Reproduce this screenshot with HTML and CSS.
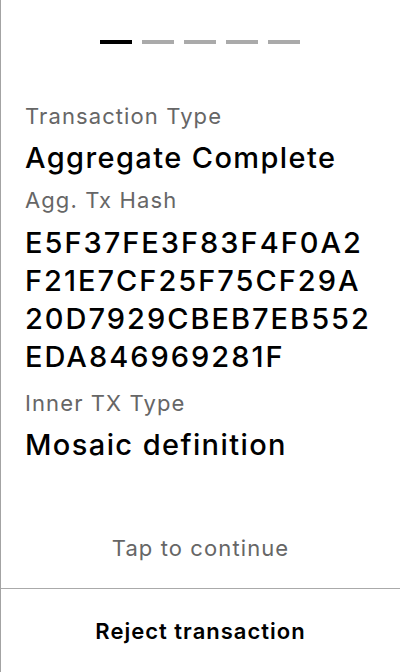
FILE: index.html
```html
<!DOCTYPE html>
<html lang="en">
<head>
<meta charset="utf-8">
<title>Transaction</title>
<link rel="stylesheet" href="styles.css">
</head>
<body>
<main class="screen">
  <div class="progress">
    <span class="bar bar-active"></span>
    <span class="bar"></span>
    <span class="bar"></span>
    <span class="bar"></span>
    <span class="bar"></span>
  </div>
  <section class="details">
    <div class="label">Transaction Type</div>
    <div class="value">Aggregate Complete</div>
    <div class="label">Agg. Tx Hash</div>
    <div class="value hash">E5F37FE3F83F4F0A2F21E7CF25F75CF29A20D7929CBEB7EB552EDA846969281F</div>
    <div class="label">Inner TX Type</div>
    <div class="value">Mosaic definition</div>
  </section>
  <div class="tap">Tap to continue</div>
  <button class="reject">Reject transaction</button>
</main>
</body>
</html>
```
FILE: styles.css
```css
* { box-sizing: border-box; }
html, body { margin: 0; padding: 0; background: #fff; }
body {
  font-family: Inter, "Noto Sans", sans-serif;
  color: #000;
}
.screen {
  width: 400px;
  height: 672px;
  border-left: 1px solid #a3a3a3;
  display: flex;
  flex-direction: column;
}
.progress {
  display: flex;
  justify-content: center;
  gap: 10px;
  padding-top: 40px;
  margin-left: -1px;
}
.bar {
  width: 32px;
  height: 4px;
  background: #aaaaaa;
}
.bar-active { background: #000; }
.details {
  padding: 0 24px;
  margin-top: 58px;
  flex: 1;
}
.label {
  font-size: 22px;
  line-height: 28px;
  letter-spacing: 1.1px;
  color: #666;
}
.value {
  font-size: 29px;
  font-weight: 500;
  line-height: 38px;
  letter-spacing: 1.4px;
  margin-top: 9px;
  margin-bottom: 9px;
  color: #000;
}
.hash {
  word-break: break-all;
  letter-spacing: 2px;
  margin-top: 10px;
  margin-bottom: 13px;
}
.tap {
  text-align: center;
  font-size: 22px;
  line-height: 28px;
  letter-spacing: 1.1px;
  color: #666;
  padding-bottom: 26px;
}
.reject {
  height: 84px;
  border: 0;
  border-top: 1px solid #aaaaaa;
  background: #fff;
  font-family: inherit;
  font-size: 22px;
  font-weight: 600;
  letter-spacing: 1px;
  color: #000;
  padding: 0;
  width: 100%;
}
```
